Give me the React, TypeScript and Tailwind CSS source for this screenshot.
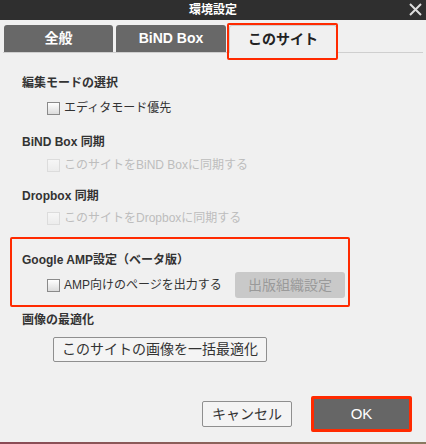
/** 環境設定ダイアログ（このサイト タブ） */

import type { ReactNode } from 'react';

const FONT = "font-['Helvetica_Neue','Liberation_Sans','Noto_Sans_CJK_JP',sans-serif]";

const Check = ({ disabled, label }: { disabled?: boolean; label: string }) => (
  <label className={`flex h-4 items-center gap-[4px] text-[12px] ${disabled ? 'text-[#bdbdbd]' : 'text-[#333]'}`}>
    <span
      className={`block h-[13px] w-[13px] border bg-gradient-to-b ${
        disabled ? 'border-[#dcdcdc] from-[#f6f6f6] to-[#ececec]' : 'border-[#8a8a8a] from-[#ffffff] to-[#dcdcdc]'
      }`}
    />
    {label}
  </label>
);

const Heading = ({ children }: { children: ReactNode }) => (
  <div className="h-4 text-[12px] font-bold leading-4 text-[#333]">{children}</div>
);

export default function App() {
  return (
    <div className={`flex h-[444px] w-[426px] flex-col bg-[#f0f0f0] ${FONT}`}>
      {/* タイトルバー */}
      <div className="relative flex h-[20px] items-center justify-center bg-[#2f2f2f] text-[12px] font-bold text-white">
        環境設定
        <svg className="absolute right-[4px] top-[3px]" width="13" height="13" viewBox="0 0 13 13">
          <path d="M1 1 L12 12 M12 1 L1 12" stroke="#dcdcdc" strokeWidth="2" />
        </svg>
      </div>

      {/* タブ */}
      <div className="mx-[3px] mt-[5px] flex h-[28px] items-end gap-[3px] border-b border-[#cfcfcf] pl-[1px] pr-[1px]">
        <div className="flex h-[27px] w-[109px] items-center justify-center rounded-t-[3px] bg-[#686868] text-[14px] font-bold text-white">
          全般
        </div>
        <div className="flex h-[27px] w-[110px] items-center justify-center rounded-t-[3px] bg-[#686868] text-[14px] font-bold text-white">
          BiND Box
        </div>
        <div className="relative -mb-px flex h-[28px] w-[108px] items-center justify-center rounded-t-[3px] border border-b-0 border-[#cfcfcf] bg-[#f0f0f0] text-[14px] font-bold text-[#222]">
          このサイト
          <div className="absolute -left-[3px] -top-[3px] h-[37px] w-[111px] rounded-[2px] border-[2.5px] border-[#ff2a00]" />
        </div>
      </div>

      {/* 本体 */}
      <div className="flex flex-1 flex-col px-[22px] pt-[22px]">
        <Heading>編集モードの選択</Heading>
        <div className="mt-[9px] pl-[25px]">
          <Check label="エディタモード優先" />
        </div>

        <div className="mt-[18px]">
          <Heading>BiND Box 同期</Heading>
        </div>
        <div className="mt-[7px] pl-[25px]">
          <Check disabled label="このサイトをBiND Boxに同期する" />
        </div>

        <div className="mt-[15px]">
          <Heading>Dropbox 同期</Heading>
        </div>
        <div className="mt-[6px] pl-[25px]">
          <Check disabled label="このサイトをDropboxに同期する" />
        </div>

        {/* Google AMP */}
        <div className="-mx-[12px] mt-[11px] w-[340px] rounded-[2px] border-2 border-[#ff2a00] pb-[7px] pl-[10px] pr-[3px] pt-[13px]">
          <Heading>Google AMP設定（ベータ版）</Heading>
          <div className="mt-[4px] flex h-[26px] items-center justify-between pl-[25px]">
            <Check label="AMP向けのページを出力する" />
            <div className="flex h-[26px] w-[110px] items-center justify-center rounded-[3px] bg-[#c9c9c9] text-[14px] text-[#9a9a9a]">
              出版組織設定
            </div>
          </div>
        </div>

        <div className="mt-[5px]">
          <Heading>画像の最適化</Heading>
        </div>
        <div className="mt-[9px] pl-[31px]">
          <div className="flex h-[25px] w-[214px] items-center justify-center rounded-[2px] border border-[#8f8f8f] bg-[#f4f4f4] text-[14px] text-[#333]">
            このサイトの画像を一括最適化
          </div>
        </div>

        {/* フッター */}
        <div className="-mr-[8px] mt-[34px] flex items-center justify-end gap-[19px]">
          <div className="flex h-[26px] w-[90px] items-center justify-center rounded-[2px] border border-[#8f8f8f] bg-[#f4f4f4] text-[14px] text-[#333]">
            キャンセル
          </div>
          <div className="rounded-[2px] border-[3px] border-[#ff2a00]">
            <div className="flex h-[30px] w-[95px] items-center justify-center bg-[#666] text-[15px] text-white">OK</div>
          </div>
        </div>
      </div>
      <div className="h-[2px] bg-gradient-to-r from-[#8a4a55] to-[#8a7a60]" />
    </div>
  );
}
